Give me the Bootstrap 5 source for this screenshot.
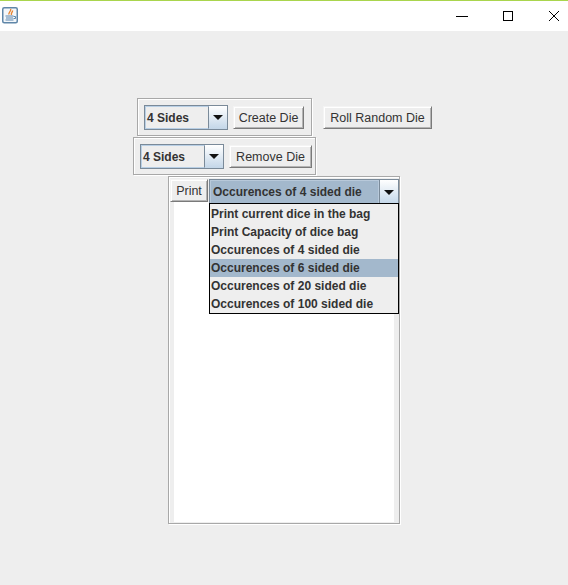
<!DOCTYPE html>
<html lang="en">
<head>
<meta charset="utf-8">
<title>Dice</title>
<link href="https://cdn.jsdelivr.net/npm/bootstrap@5.3.0/dist/css/bootstrap.min.css" rel="stylesheet">
<style>
html,body{height:585px;overflow:hidden}
body{background:#eee;font-family:"Liberation Sans",Arial,sans-serif;font-size:12px;color:#333;line-height:1}
.winbar{height:31px;background:#fff;border-top:1px solid #a9d54d;overflow:hidden}
.winicon{margin:6px 0 0 2px}
.winctl{width:46px;height:30px}
.win-btns{margin-right:-9px}
.stage{padding-top:67px}
.row-one{padding-left:137px;height:39px}
.row-two{padding-left:133px;height:39px}
.row-three{padding-left:168px}
.etched{border:1px solid #a8a8a8;box-shadow:inset 1px 1px 0 #fff,1px 1px 0 #fff}
.panel-one{width:175px;height:38px;padding:6px 0 0 6px;gap:5px}
.panel-two{width:183px;height:38px;padding:6px 0 0 6px;gap:5px}
.java-btn{--bs-btn-padding-x:0;--bs-btn-padding-y:0;--bs-btn-font-size:12.5px;--bs-btn-line-height:1;--bs-btn-border-radius:0;--bs-btn-color:#333;--bs-btn-hover-color:#333;--bs-btn-bg:#eee;height:23px;margin-top:1px;padding-top:1px;background:#eee;border:1px solid;border-color:#f4f4f4 #7a7a7a #7a7a7a #f4f4f4;box-shadow:inset 1px 1px 0 #fff,inset -1px -1px 0 #b4b4b4;font-family:"Liberation Sans",Arial,sans-serif}
.w-create{width:71px}
.w-remove{width:83px}
.w-roll{width:109px;margin-left:11px;margin-top:8px}
.w-print{width:38px}
.combo{width:84px;height:25px;border:1px solid #7a8a99;background:#eee;font-weight:700;box-shadow:inset 1px 1px 0 #fff}
.combo-text{flex:1 1 0;padding-left:1px;border-right:1px solid #7a8a99;border-left:1px solid #b8cfe5;border-top:1px solid #b8cfe5;border-bottom:1px solid #b8cfe5}
.combo-arrow{width:18px;background:linear-gradient(#fff,#c3d6e8)}
.tri{width:0;height:0;border-left:5px solid transparent;border-right:5px solid transparent;border-top:5px solid #111}
.scroller{width:232px;height:348px;position:relative;padding:1px 0 0 1px}
.view{position:absolute;left:5px;right:5px;top:25px;bottom:1px;background:#fff}
.combo-wide{width:190px;height:25px;margin-left:1px;margin-top:1px;background:#a3b8cc;border:1px solid #7a8a99;font-weight:700;position:relative;z-index:2;border-bottom:0}
.combo-wide .combo-text{padding-left:3px;border:0;border-right:1px solid #7a8a99;box-shadow:inset 0 0 0 1px #b8c9da}
.popup{position:absolute;left:40px;top:26px;width:190px;border:1px solid #000;border-radius:0;background:#eee;z-index:3;padding-top:1px;--bs-list-group-bg:#eee;--bs-list-group-border-width:0;--bs-list-group-border-radius:0}
.popup .list-group-item{height:18px;padding:0 0 0 1px;display:flex;align-items:center;font-weight:700;font-size:12px;color:#333;background:#eee;border:0}
.popup .list-group-item.picked{background:#a3b8cc}
</style>
</head>
<body>
<header class="winbar d-flex align-items-start">
  <svg class="winicon" width="16" height="17" viewBox="0 0 16 17" aria-label="Java">
    <rect x=".75" y=".75" width="14.500" height="15" rx="1.500" fill="#f4f7fa" stroke="#5f86a8" stroke-width="1.500"/>
    <path d="M8.500 2C10 4 6 5 7 7.500M10.500 3.500C11 5 8.500 6 9.500 8" fill="none" stroke="#e8822e" stroke-width="1.400"/>
    <path d="M3.500 9h8M4 11h7M3.500 13h8" stroke="#5b86ad" stroke-width="1.200"/>
    <path d="M11.500 9.500h2v2h-2" fill="none" stroke="#5b86ad"/>
  </svg>
  <div class="ms-auto d-flex win-btns">
    <div class="winctl d-flex align-items-center justify-content-center"><svg width="12" height="12" viewBox="0 0 12 12"><path d="M0 6.500h12" stroke="#000"/></svg></div>
    <div class="winctl d-flex align-items-center justify-content-center"><svg width="12" height="12" viewBox="0 0 12 12"><rect x="1.500" y="1.500" width="9" height="9" fill="none" stroke="#000"/></svg></div>
    <div class="winctl d-flex align-items-center justify-content-center"><svg width="12" height="12" viewBox="0 0 12 12"><path d="M1 1l10 10M11 1L1 11" stroke="#000"/></svg></div>
  </div>
</header>
<main class="stage">
  <div class="row-one d-flex">
    <div class="etched panel-one d-flex align-items-start">
      <div class="combo d-flex"><div class="combo-text d-flex align-items-center">4 Sides</div><div class="combo-arrow d-flex align-items-center justify-content-center"><span class="tri"></span></div></div>
      <button class="btn java-btn w-create" type="button">Create Die</button>
    </div>
    <button class="btn java-btn w-roll" type="button">Roll Random Die</button>
  </div>
  <div class="row-two d-flex">
    <div class="etched panel-two d-flex align-items-start">
      <div class="combo d-flex"><div class="combo-text d-flex align-items-center">4 Sides</div><div class="combo-arrow d-flex align-items-center justify-content-center"><span class="tri"></span></div></div>
      <button class="btn java-btn w-remove" type="button">Remove Die</button>
    </div>
  </div>
  <div class="row-three d-flex">
    <div class="etched scroller">
      <div class="view"></div>
      <div class="d-flex align-items-start position-relative">
        <button class="btn java-btn w-print" type="button">Print</button>
        <div class="combo-wide d-flex"><div class="combo-text d-flex align-items-center">Occurences of 4 sided die</div><div class="combo-arrow d-flex align-items-center justify-content-center"><span class="tri"></span></div></div>
      </div>
      <ul class="popup list-group">
        <li class="list-group-item">Print current dice in the bag</li>
        <li class="list-group-item">Print Capacity of dice bag</li>
        <li class="list-group-item">Occurences of 4 sided die</li>
        <li class="list-group-item picked">Occurences of 6 sided die</li>
        <li class="list-group-item">Occurences of 20 sided die</li>
        <li class="list-group-item">Occurences of 100 sided die</li>
      </ul>
    </div>
  </div>
</main>
</body>
</html>
